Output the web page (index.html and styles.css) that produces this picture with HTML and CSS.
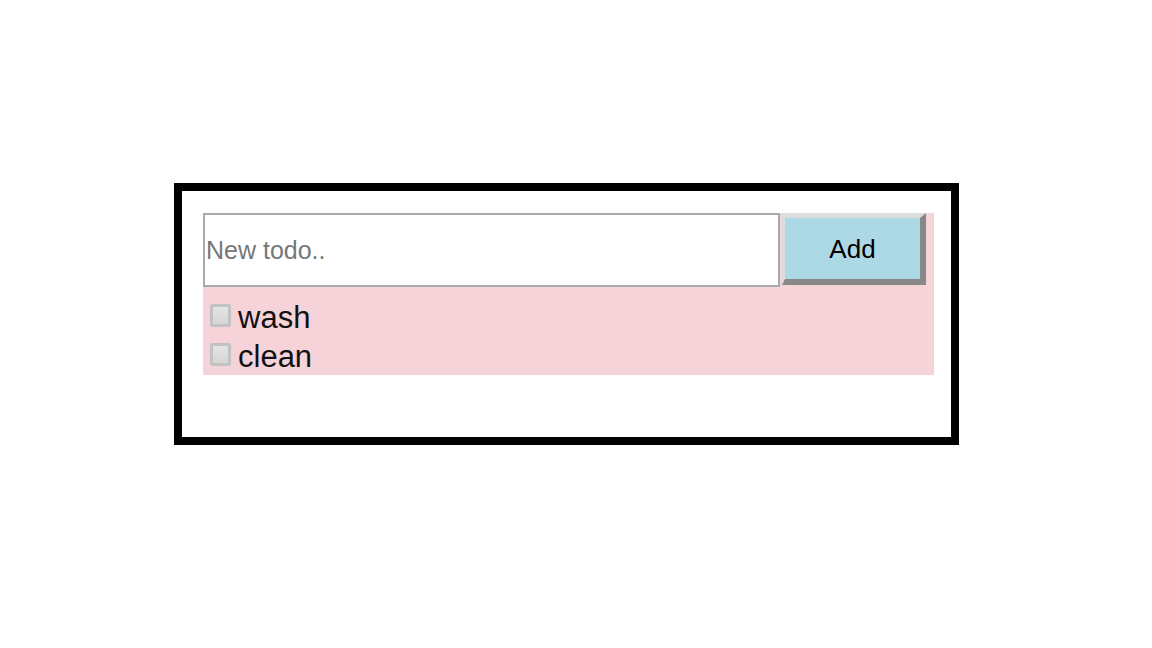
FILE: index.html
```html
<!DOCTYPE html>
<html>
<head>
<meta charset="utf-8">
<link rel="stylesheet" href="styles.css">
</head>
<body>
<div class="page">
  <div class="box">
    <div class="panel">
      <div class="entry">
        <input class="new-todo" type="text" placeholder="New todo..">
        <button class="add-btn">Add</button>
      </div>
      <ul class="todos">
        <li class="todo"><span class="check"></span><span class="label">wash</span></li>
        <li class="todo"><span class="check"></span><span class="label">clean</span></li>
      </ul>
    </div>
  </div>
</div>
</body>
</html>
```

FILE: styles.css
```css
html, body {
  margin: 0;
  padding: 0;
  background: #ffffff;
  font-family: "Liberation Sans", Arial, sans-serif;
}

.page {
  padding: 183px 0 0 174px;
}

.box {
  width: 731px;
  height: 224px;
  border: 8px solid #000000;
  padding: 22px 17px 0 21px;
  box-sizing: content-box;
}

.panel {
  width: 731px;
  background: #f6d3d9;
  padding-bottom: 1px;
}

.entry {
  display: flex;
  align-items: flex-start;
}

.new-todo {
  width: 577px;
  height: 74px;
  box-sizing: border-box;
  border: 2px solid #aaaaaa;
  padding: 0 1px;
  margin: 0;
  font-family: "Liberation Sans", Arial, sans-serif;
  font-size: 25px;
  color: #333;
  background: #ffffff;
  outline: none;
}

.new-todo::placeholder {
  color: #777777;
}

.add-btn {
  margin: 0 0 0 2px;
  width: 144px;
  height: 72px;
  box-sizing: border-box;
  background: #add8e6;
  border-style: solid;
  border-width: 5px 6px 6px 3px;
  border-color: #dddddd #888888 #888888 #dddddd;
  font-family: "Liberation Sans", Arial, sans-serif;
  font-size: 26px;
  color: #000000;
  padding: 2px 0 0 0;
}

.todos {
  list-style: none;
  margin: 9px 0 0 0;
  padding: 0;
}

.todo {
  display: flex;
  align-items: center;
  height: 39px;
  font-size: 31px;
  color: #111111;
  padding-left: 7px;
}

.check {
  display: inline-block;
  width: 21px;
  height: 23px;
  box-sizing: border-box;
  border: 3px solid #c2c2c2;
  border-radius: 2px;
  background: linear-gradient(#e4e4e4, #d6d6d6);
  margin-right: 7px;
}

.label {
  line-height: 39px;
  position: relative;
  top: 2px;
}
```
